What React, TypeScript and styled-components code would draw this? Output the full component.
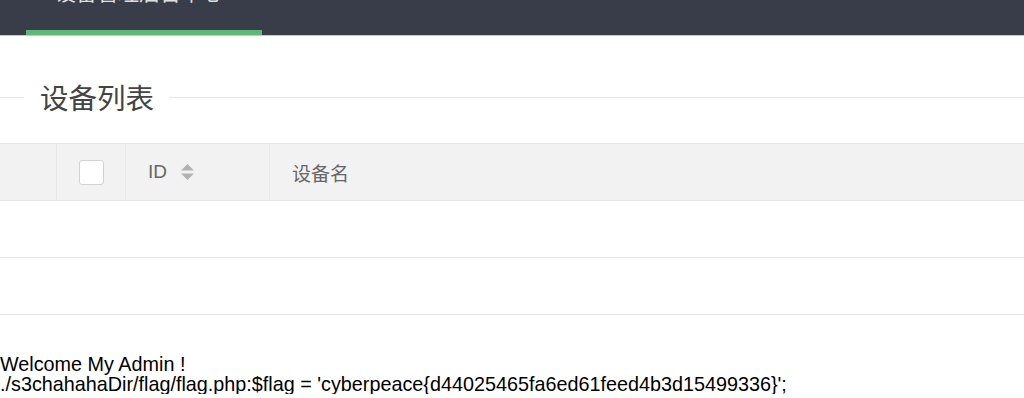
import React from "react";
import styled, { createGlobalStyle } from "styled-components";

const Global = createGlobalStyle`
  html, body { margin: 0; padding: 0; background: #fff; }
  body { font-family: "Liberation Sans", Arial, sans-serif; overflow: hidden; }
`;

const NavBar = styled.div`
  height: 35px;
  background: #393d49;
  border-bottom: 1px solid #c8c9cc;
  display: flex;
  padding-left: 26px;
  overflow: hidden;
`;

const NavItem = styled.div<{ $active?: boolean }>`
  width: 236px;
  height: 36px;
  box-sizing: border-box;
  display: flex;
  flex-direction: column;
  justify-content: flex-start;
  align-items: center;
  border-bottom: 6px solid ${(p) => (p.$active ? "#5fb878" : "transparent")};
  position: relative;
  z-index: 1;
`;

const NavText = styled.span`
  font-family: "Noto Sans CJK SC", sans-serif;
  font-size: 21px;
  line-height: 24px;
  margin-top: -21px;
  margin-right: 10px;
  color: rgba(255, 255, 255, 0.85);
  white-space: nowrap;
`;

const Legend = styled.div`
  display: flex;
  align-items: center;
  margin-top: 46px;
  height: 30px;
`;

const LegendLine = styled.div<{ $w?: number }>`
  height: 1px;
  background: #e6e6e6;
  ${(p) => (p.$w ? `width: ${p.$w}px;` : "flex: 1;")}
`;

const LegendText = styled.span`
  font-family: "Noto Sans CJK SC", sans-serif;
  font-size: 28.5px;
  line-height: 30px;
  color: #444;
  padding: 0 15px 0 16px;
`;

const Table = styled.div`
  margin-top: 31px;
  border-top: 1px solid #e6e6e6;
`;

const HeadRow = styled.div`
  display: grid;
  grid-template-columns: 57px 69px 144px 1fr;
  height: 56px;
  background: #f2f2f2;
  border-bottom: 1px solid #e6e6e6;
`;

const HeadCell = styled.div`
  display: flex;
  align-items: center;
  padding-left: 22px;
  border-right: 1px solid #e6e6e6;
  color: #666;
  font-size: 19px;
  font-family: "Liberation Sans", "Noto Sans CJK SC", sans-serif;
  &:last-child { border-right: none; }
`;

const Check = styled.span`
  display: block;
  width: 23px;
  height: 23px;
  background: #fff;
  border: 1px solid #d2d2d2;
  border-radius: 3px;
`;

const CjkLabel = styled.span`
  font-family: "Noto Sans CJK SC", sans-serif;
  font-size: 19px;
  color: #666;
`;

const Sort = styled.svg`
  margin-left: 14px;
`;

const BodyRow = styled.div`
  height: 56px;
  border-bottom: 1px solid #e6e6e6;
`;

const Output = styled.div`
  margin-top: 39px;
  font-family: "Liberation Sans", Arial, sans-serif;
  font-size: 19.8px;
  line-height: 20px;
  color: #000;
  white-space: nowrap;
`;

export default function App() {
  return (
    <>
      <Global />
      <NavBar>
        <NavItem $active>
          <NavText>设备管理后台中心</NavText>
        </NavItem>
      </NavBar>
      <Legend>
        <LegendLine $w={24} />
        <LegendText>设备列表</LegendText>
        <LegendLine />
      </Legend>
      <Table>
        <HeadRow>
          <HeadCell />
          <HeadCell>
            <Check />
          </HeadCell>
          <HeadCell>
            ID
            <Sort width="13" height="18" viewBox="0 0 13 18">
              <polygon points="6.5,1 13,7.5 0,7.5" fill="#b2b2b2" />
              <polygon points="0,10.5 13,10.5 6.5,17" fill="#b2b2b2" />
            </Sort>
          </HeadCell>
          <HeadCell>
            <CjkLabel>设备名</CjkLabel>
          </HeadCell>
        </HeadRow>
        <BodyRow />
        <BodyRow />
      </Table>
      <Output>
        <div>Welcome My Admin !</div>
        <div>./s3chahahaDir/flag/flag.php:$flag = 'cyberpeace{"{"}d44025465fa6ed61feed4b3d15499336{"}"}';</div>
      </Output>
    </>
  );
}
